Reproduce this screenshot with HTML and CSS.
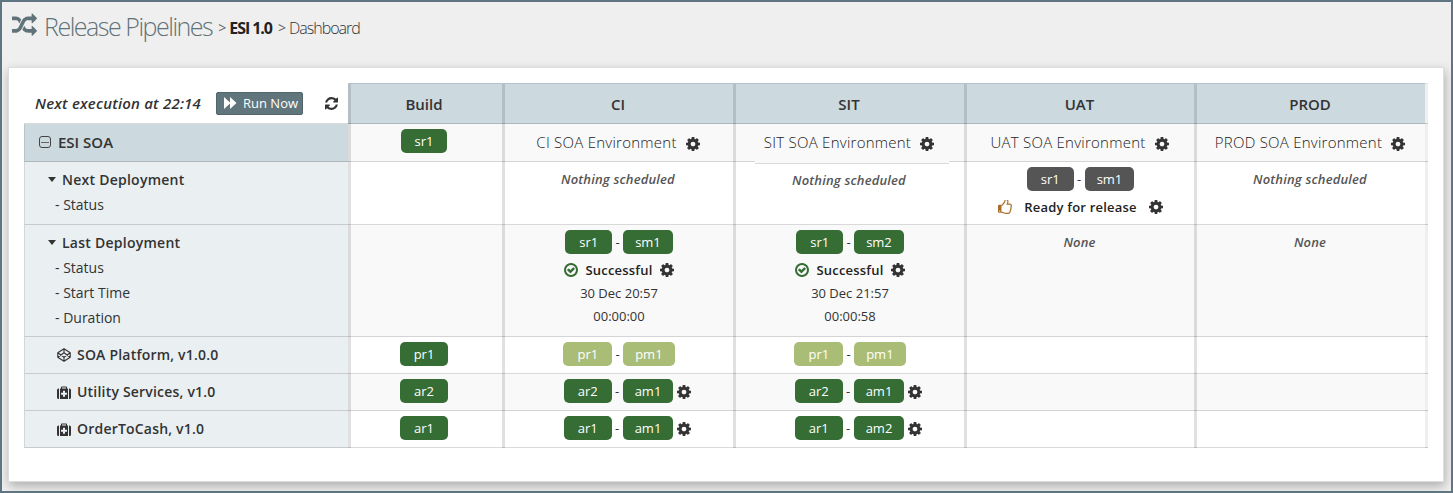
FILE: index.html
```html
<!DOCTYPE html>
<html lang="en">
<head>
<meta charset="utf-8">
<title>Release Pipelines</title>
<link rel="stylesheet" href="styles.css">
</head>
<body>
<svg class="defs" aria-hidden="true">
<symbol id="cog" viewBox="128 128 1536 1536"><path d="M1152 896q0-106-75-181t-181-75-181 75-75 181 75 181 181 75 181-75 75-181zm512-109v222q0 12-8 23t-20 13l-185 28q-19 54-39 91 35 50 107 138 10 12 10 25t-9 23q-27 37-99 108t-94 71q-12 0-26-9l-138-108q-44 23-91 38-16 136-29 186-7 28-36 28h-222q-14 0-24.500-8.500t-11.500-21.500l-28-184q-49-16-90-37l-141 107q-10 9-25 9-14 0-25-11-126-114-165-168-7-10-7-23 0-12 8-23 15-21 51-66.500t54-70.500q-27-50-41-99l-183-27q-13-2-21-12.500t-8-23.500v-222q0-12 8-23t19-13l186-28q14-46 39-92-40-57-107-138-10-12-10-24 0-10 9-23 26-36 98.500-107.500t94.500-71.500q13 0 26 10l138 107q44-23 91-38 16-136 29-186 7-28 36-28h222q14 0 24.500 8.500t11.500 21.500l28 184q49 16 90 37l142-107q9-9 24-9 13 0 25 10 129 119 165 170 7 8 7 22 0 12-8 23-15 21-51 66.500t-54 70.500q26 50 41 98l183 28q13 2 21 12.500t8 23.500z"/></symbol>
<symbol id="random" viewBox="0 0 1792 1792"><path d="M666 481q-60 92-137 273-22-45-37-72.500t-40.500-63.500-51-56.500-63-35-81.500-14.500h-224q-14 0-23-9t-9-23v-192q0-14 9-23t23-9h224q250 0 410 225zm1126 799q0 14-9 23l-320 320q-9 9-23 9-13 0-22.500-9.500t-9.500-22.500v-192q-32 0-85 .5t-81 1-73-1-71-5-64-10.500-63-18.500-58-28.500-59-40-55-53.500-56-69.500q59-93 136-273 22 45 37 72.500t40.500 63.500 51 56.500 63 35 81.500 14.500h256v-192q0-14 9-23t23-9q12 0 24 10l319 319q9 9 9 23zm0-896q0 14-9 23l-320 320q-9 9-23 9-13 0-22.500-9.500t-9.500-22.500v-192h-256q-48 0-87 15t-69 45-51 61.500-45 77.500q-32 62-78 171-29 66-49.500 111t-54 105-64 100-74 83-90 68.500-106.500 42-128 16.500h-224q-14 0-23-9t-9-23v-192q0-14 9-23t23-9h224q48 0 87-15t69-45 51-61.500 45-77.500q32-62 78-171 29-66 49.500-111t54-105 64-100 74-83 90-68.500 106.500-42 128-16.500h256v-192q0-14 9-23t23-9q12 0 24 10l319 319q9 9 9 23z"/></symbol>
<symbol id="refresh" viewBox="128 128 1536 1536"><path d="M1639 1056q0 5-1 7-64 268-268 434.500t-478 166.500q-146 0-282.500-55t-243.500-157l-129 129q-19 19-45 19t-45-19-19-45v-448q0-26 19-45t45-19h448q26 0 45 19t19 45-19 45l-137 137q71 66 161 102t187 36q134 0 250-65t186-179q11-17 53-117 8-23 30-23h192q13 0 22.500 9.500t9.500 22.500zm25-800v448q0 26-19 45t-45 19h-448q-26 0-45-19t-19-45 19-45l138-138q-148-137-349-137-134 0-250 65t-186 179q-11 17-53 117-8 23-30 23h-199q-13 0-22.500-9.500t-9.500-22.500v-7q65-268 270-434.500t480-166.500q146 0 284 55.500t245 156.500l130-129q19-19 45-19t45 19 19 45z"/></symbol>
<symbol id="check" viewBox="128 128 1536 1536"><path d="M1299 813l-422 422q-19 19-45 19t-45-19l-294-294q-19-19-19-45t19-45l102-102q19-19 45-19t45 19l147 147 275-275q19-19 45-19t45 19l102 102q19 19 19 45t-19 45zm141 83q0-148-73-273t-198-198-273-73-273 73-198 198-73 273 73 273 198 198 273 73 273-73 198-198 73-273zm224 0q0 209-103 385.500t-279.500 279.500-385.500 103-385.500-103-279.500-279.500-103-385.500 103-385.500 279.500-279.500 385.500-103 385.500 103 279.500 279.500 103 385.500z"/></symbol>
<symbol id="thumb" viewBox="0 128 1536 1536"><path d="M256 1344q0-26-19-45t-45-19-45 19-19 45 19 45 45 19 45-19 19-45zm1152-576q0-51-39-89.500t-89-38.500h-352q0-58 48-159.500t48-160.500q0-98-32-145t-128-47q-26 26-38 85t-30.500 125.500-59.500 109.500q-22 23-77 91-4 5-23 30t-31.500 41-34.500 42.500-40 44-38.500 35.500-40 27-35.500 9h-32v640h32q13 0 31.500 3t33 6.500 38 11 35 11.500 35.500 12.500 29 10.500q211 73 342 73h121q192 0 192-167 0-26-5-56 30-16 47.500-52.500t17.500-73.500-18-69q53-50 53-119 0-25-10-55.500t-25-47.500q32-1 53.500-47t21.500-81zm128-1q0 89-49 163 9 33 9 69 0 77-38 144 3 21 3 43 0 101-60 178 1 139-85 219.500t-227 80.500h-129q-96 0-189.500-22.500t-216.500-65.500q-116-40-138-40h-288q-53 0-90.500-37.500t-37.500-90.500v-640q0-53 37.500-90.500t90.500-37.500h274q36-24 137-155 58-75 107-128 24-25 35.500-85.500t30.500-126.500 62-108q39-37 90-37 84 0 151 32.500t102 101.500 35 186q0 93-48 192h176q104 0 180 76t76 179z"/></symbol>
<symbol id="medkit" viewBox="0 0 14 13"><path fill-rule="evenodd" d="M2 2.500V13h-.5A1.500 1.500 0 0 1 0 11.500V4a1.500 1.500 0 0 1 1.500-1.500zM12 2.500h.5A1.500 1.500 0 0 1 14 4v7.500a1.500 1.500 0 0 1-1.500 1.500H12zM3 2.500h1V1.300Q4 .5 4.800.5h4.400q.8 0 .8.8v1.200h1V13H3zM5 1.500v1h4v-1zM6 4.800v2H4v2h2v2h2v-2h2v-2H8v-2z"/></symbol>
<symbol id="codepen" viewBox="0 0 14 14"><path fill="none" stroke="currentColor" stroke-width="1.150" stroke-linejoin="round" d="M7 .8l6.200 4v4.400L7 13.200.8 9.200V4.800zM7 .8v4M7 9.200v4M.8 4.800L7 9.200l6.200-4.400M.8 9.200L7 4.800l6.200 4.400"/></symbol>
</svg>
<header class="title"><svg class="title-icon"><use href="#random"/></svg><h1>Release Pipelines</h1><span class="crumb sep">&gt;</span><b class="crumb">ESI 1.0</b><span class="crumb sep">&gt;</span><span class="crumb page">Dashboard</span></header>
<main class="card">
<div class="table">
<div class="cell tools"><i class="next">Next execution at 22:14</i><button class="run"><svg class="ff" viewBox="0 0 13 12"><path d="M0 0l6 5.500V0l6.500 6L6 12V6.500L0 12z"/></svg>Run Now</button><svg class="icon refresh"><use href="#refresh"/></svg></div>
<div class="cell head first">Build</div><div class="cell head">CI</div><div class="cell head">SIT</div><div class="cell head">UAT</div><div class="cell head">PROD</div><div class="edge edge-head"></div>

<div class="cell group"><span class="minus"></span>ESI SOA</div>
<div class="cell odd build"><span class="tag">sr1</span></div>
<div class="cell odd env">CI SOA Environment<svg class="icon"><use href="#cog"/></svg></div>
<div class="cell odd env">SIT SOA Environment<svg class="icon"><use href="#cog"/></svg></div>
<div class="cell odd env">UAT SOA Environment<svg class="icon"><use href="#cog"/></svg></div>
<div class="cell odd env">PROD SOA Environment<svg class="icon"><use href="#cog"/></svg></div><div class="edge odd-edge"></div>

<div class="cell label"><div class="sub">Next Deployment</div><div class="item">- Status</div></div>
<div class="cell"></div>
<div class="cell none">Nothing scheduled</div>
<div class="cell none lowered">Nothing scheduled</div>
<div class="cell stack"><div class="tags"><span class="tag grey">sr1</span><span class="dash">-</span><span class="tag grey">sm1</span></div><div class="state ready"><svg class="icon thumb"><use href="#thumb"/></svg>Ready for release<svg class="icon"><use href="#cog"/></svg></div></div>
<div class="cell none">Nothing scheduled</div><div class="edge"></div>

<div class="cell label"><div class="sub">Last Deployment</div><div class="item">- Status</div><div class="item">- Start Time</div><div class="item">- Duration</div></div>
<div class="cell odd"></div>
<div class="cell odd stack"><div class="tags"><span class="tag">sr1</span><span class="dash">-</span><span class="tag">sm1</span></div><div class="state"><svg class="icon ok"><use href="#check"/></svg>Successful<svg class="icon"><use href="#cog"/></svg></div><div class="time">30 Dec 20:57</div><div class="time">00:00:00</div></div>
<div class="cell odd stack"><div class="tags"><span class="tag">sr1</span><span class="dash">-</span><span class="tag">sm2</span></div><div class="state"><svg class="icon ok"><use href="#check"/></svg>Successful<svg class="icon"><use href="#cog"/></svg></div><div class="time">30 Dec 21:57</div><div class="time">00:00:58</div></div>
<div class="cell odd none">None</div>
<div class="cell odd none">None</div><div class="edge"></div>

<div class="cell label app"><svg class="icon"><use href="#codepen"/></svg>SOA Platform, v1.0.0</div>
<div class="cell build"><span class="tag">pr1</span></div>
<div class="cell stack"><div class="tags"><span class="tag lime">pr1</span><span class="dash">-</span><span class="tag lime">pm1</span></div></div>
<div class="cell stack"><div class="tags"><span class="tag lime">pr1</span><span class="dash">-</span><span class="tag lime">pm1</span></div></div>
<div class="cell"></div><div class="cell"></div><div class="edge"></div>

<div class="cell label app"><svg class="icon med"><use href="#medkit"/></svg>Utility Services, v1.0</div>
<div class="cell odd build"><span class="tag">ar2</span></div>
<div class="cell odd stack"><div class="tags wide"><span class="tag">ar2</span><span class="dash">-</span><span class="tag">am1</span><svg class="icon"><use href="#cog"/></svg></div></div>
<div class="cell odd stack"><div class="tags wide"><span class="tag">ar2</span><span class="dash">-</span><span class="tag">am1</span><svg class="icon"><use href="#cog"/></svg></div></div>
<div class="cell odd"></div><div class="cell odd"></div><div class="edge"></div>

<div class="cell label app"><svg class="icon med"><use href="#medkit"/></svg>OrderToCash, v1.0</div>
<div class="cell build"><span class="tag">ar1</span></div>
<div class="cell stack"><div class="tags wide"><span class="tag">ar1</span><span class="dash">-</span><span class="tag">am1</span><svg class="icon"><use href="#cog"/></svg></div></div>
<div class="cell stack"><div class="tags wide"><span class="tag">ar1</span><span class="dash">-</span><span class="tag">am2</span><svg class="icon"><use href="#cog"/></svg></div></div>
<div class="cell"></div><div class="cell"></div><div class="edge"></div>
</div>
</main>
</body>
</html>
```
FILE: styles.css
```css
* { box-sizing: border-box; }
body {
  margin: 0;
  height: 493px;
  overflow: hidden;
  border: 2px solid #5f7682;
  background: #efefef;
  font: 14px/20px "Open Sans", sans-serif;
  color: #333;
}
.defs { display: none; }
svg { display: block; flex: none; fill: currentColor; }
.icon { width: 14px; height: 14px; }
.title {
  display: flex;
  align-items: flex-start;
  height: 65px;
  padding: 6px 0 0 10px;
  line-height: 36px;
  font-size: 16px;
}
.title-icon { width: 25px; height: 25px; color: #5f7379; margin-top: 5px; }
h1 { margin: 0 0 0 7px; font-size: 25px; font-weight: 300; color: #5f7379; letter-spacing: -1.480px; }
.crumb { margin-left: 4px; padding-top: 2px; letter-spacing: -1.050px; }
.sep { margin-left: 6px; font-size: 14px; color: #666; }
b.crumb { color: #222; }
.page { font-weight: 300; letter-spacing: -1px; }
.card {
  width: 1436px;
  height: 415px;
  margin-left: 6px;
  padding: 15px 0 0 15px;
  background: #fff;
  border: 1px solid #ddd;
  box-shadow: 1px 4px 10px rgba(0, 0, 0, .28);
}
.table {
  display: grid;
  grid-template-columns: 324px 154px 231px 231px 230px 231px 3px;
  grid-template-rows: 41px 38px 63px 112px 37px 37px 37px;
  width: 1404px;
}
.cell {
  border-bottom: 1px solid rgba(0, 0, 0, .15);
  padding-left: 3px;
  background: linear-gradient(rgba(0, 0, 0, .12), rgba(0, 0, 0, .12)) 0 0 / 3px 100% no-repeat border-box;
  text-align: center;
  position: relative;
}
.odd { background-color: #f9f9f9; }
.edge { border-bottom: 1px solid rgba(0, 0, 0, .17); background-color: #efefef; }
.edge-head { border-top: 1px solid #e2e2e2; }
.head {
  padding: 0 1px 0 2px;
  border-top: 1px solid #b5c2c7;
  background-color: #ccd9df;
  font-size: 15px;
  font-weight: 600;
  line-height: 40px;
}
.first { padding: 0 2px 0 0; }
.tools {
  display: flex;
  align-items: center;
  background: none;
  padding: 0 10px 0 11px;
}
.next { font-size: 15px; letter-spacing: .2px; font-weight: 600; width: 181px; text-align: left; white-space: nowrap; }
.run {
  display: flex;
  align-items: center;
  gap: 6px;
  width: 87px;
  height: 23px;
  padding: 0 0 0 7px;
  border: 1px solid #53656b;
  border-radius: 2px;
  background: #60757c;
  color: #fff;
  font: 13px "Open Sans", sans-serif;
}
.ff { width: 13px; height: 12px; }
.refresh { margin-left: 22px; width: 13px; height: 13px; }
.group {
  display: flex;
  align-items: center;
  padding: 0 0 1px 14px;
  border-left: 1px solid #b9c5ca;
  background: #ccd9df;
  font-size: 15px;
  font-weight: 600;
}
.minus {
  width: 12px;
  height: 12px;
  margin-right: 7px;
  border: 1px solid #444;
  border-radius: 3px;
  background: linear-gradient(#666, #666) center / 8px 1px no-repeat;
}
.label { border-left: 1px solid #d2d7da; background: #eaeff2; padding: 5px 0 0 30px; text-align: left; }
.sub { display: flex; align-items: center; gap: 6px; margin-left: -7px; height: 25px; font-weight: 600; letter-spacing: .25px; }
.sub::before { content: ""; border: 4px solid transparent; border-top: 5px solid #333; border-bottom: 0; }
.item { height: 25px; line-height: 25px; }
.app { display: flex; align-items: center; gap: 6px; padding: 0 0 0 32px; font-weight: 600; letter-spacing: .2px; }
.med { height: 13px; }
.build { padding: 5px 2px 0 0; }
.tag {
  display: inline-block;
  height: 24px;
  padding: 0 14px;
  border-radius: 5px;
  background: #356d35;
  color: #fff;
  font-size: 13px;
  line-height: 24px;
}
.dash + .tag { padding: 0 12px; }
.grey { background: #555; }
.lime { background: #a9bd77; }
.env {
  display: flex;
  justify-content: center;
  gap: 9px;
  padding-left: 1px;
  font-size: 15px;
  line-height: 37px;
  font-weight: 300;
  letter-spacing: .25px;
  color: #222;
}
.env .icon { margin-top: 13px; color: #333; }
.none { padding: 7px 2px 0 3px; color: #555; font: italic 600 13px/20px "Open Sans", sans-serif; letter-spacing: .18px; }
.lowered { padding-top: 8px; }
.lowered::before {
  content: "";
  position: absolute;
  top: -1px;
  left: 22px;
  width: 194px;
  height: 2px;
  background: #f9f9f9;
  border-bottom: 1px solid #dadada;
}
.stack { padding-top: 5px; font-size: 13px; }
.tags { display: flex; justify-content: center; }
.dash { width: 11px; line-height: 24px; }
.wide { padding-left: 17px; }
.wide .icon { margin: 6px 0 0 4px; }
.state {
  display: flex;
  align-items: center;
  justify-content: center;
  gap: 7px;
  height: 32px;
  margin-bottom: -4px;
  font-weight: 600;
  letter-spacing: .2px;
  color: #222;
}
.state .icon:last-child { color: #333; }
.ready { gap: 12px; }
.ok { color: #356d35; }
.thumb { color: #a96d2a; }
.time { line-height: 23px; }
```
